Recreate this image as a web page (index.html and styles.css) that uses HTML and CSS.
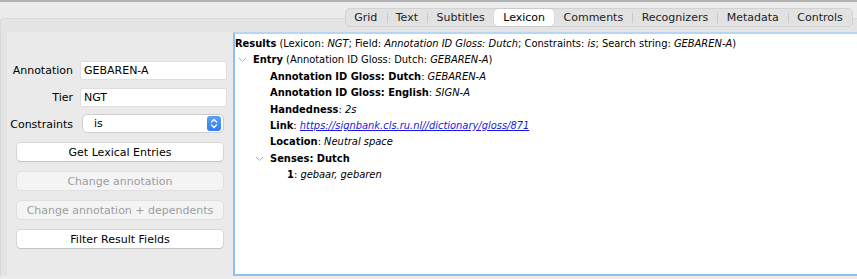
FILE: index.html
```html
<!DOCTYPE html>
<html lang="en">
<head>
    <meta charset="UTF-8">
    <meta name="viewport" content="width=device-width, initial-scale=1.0">
    <title>Lexicon</title>
    <link rel="stylesheet" href="styles.css">
</head>
<body>
    <div class="janela">
        <div class="abas">
            <div class="aba">Grid</div>
            <div class="aba">Text</div>
            <div class="aba">Subtitles</div>
            <div class="aba ativa">Lexicon</div>
            <div class="aba">Comments</div>
            <div class="aba">Recognizers</div>
            <div class="aba">Metadata</div>
            <div class="aba">Controls</div>
        </div>

        <div class="painel">
            <div class="esquerda">
                <div class="campos">
                    <label class="rotulo">Annotation</label>
                    <div class="entrada">GEBAREN-A</div>
                    <label class="rotulo">Tier</label>
                    <div class="entrada">NGT</div>
                    <label class="rotulo">Constraints</label>
                    <div class="selecao">
                        <span>is</span>
                        <span class="setas">
                            <svg width="8" height="11" viewBox="0 0 8 11">
                                <path d="M1.5 4 L4 1.5 L6.5 4 M1.5 7 L4 9.5 L6.5 7" fill="none" stroke="#fff" stroke-width="1.3" stroke-linecap="round" stroke-linejoin="round"/>
                            </svg>
                        </span>
                    </div>
                </div>
                <div class="botoes">
                    <button class="botao">Get Lexical Entries</button>
                    <button class="botao" disabled>Change annotation</button>
                    <button class="botao" disabled>Change annotation + dependents</button>
                    <button class="botao">Filter Result Fields</button>
                </div>
            </div>

            <div class="resultados">
                <div class="linha"><b>Results</b> (Lexicon: <i>NGT</i>; Field: <i>Annotation ID Gloss: Dutch</i>; Constraints: <i>is</i>; Search string: <i>GEBAREN-A</i>)</div>
                <div class="linha nivel1"><svg class="seta" width="9" height="6" viewBox="0 0 9 6"><path d="M1 1 L4.5 4.5 L8 1" fill="none" stroke="#b0b0b0" stroke-width="1"/></svg><b>Entry</b> (Annotation ID Gloss: Dutch: <i>GEBAREN-A</i>)</div>
                <div class="linha nivel2"><b>Annotation ID Gloss: Dutch</b>: <i>GEBAREN-A</i></div>
                <div class="linha nivel2"><b>Annotation ID Gloss: English</b>: <i>SIGN-A</i></div>
                <div class="linha nivel2"><b>Handedness</b>: <i>2s</i></div>
                <div class="linha nivel2"><b>Link</b>: <a href="#"><i>https://signbank.cls.ru.nl//dictionary/gloss/871</i></a></div>
                <div class="linha nivel2"><b>Location</b>: <i>Neutral space</i></div>
                <div class="linha nivel2 comseta"><svg class="seta" width="9" height="6" viewBox="0 0 9 6"><path d="M1 1 L4.5 4.5 L8 1" fill="none" stroke="#b0b0b0" stroke-width="1"/></svg><b>Senses: Dutch</b></div>
                <div class="linha nivel3"><b>1</b>: <i>gebaar, gebaren</i></div>
            </div>
        </div>
    </div>
</body>
</html>
```

FILE: styles.css
```css
body {
    margin: 0;
    font-family: "DejaVu Sans", Verdana, sans-serif;
    font-size: 11px;
    color: #000;
    background-color: #ececec;
    overflow: hidden;
}

.janela {
    height: 279px;
    box-sizing: border-box;
    border-top: 2px solid #b2b2b2;
}

.abas {
    display: flex;
    width: max-content;
    margin: 6px 4px -9px auto;
    position: relative;
    background-color: #e2e2e2;
    border: 1px solid #d2d2d2;
    border-radius: 5px;
    height: 17px;
}

.aba {
    padding: 0 9.25px;
    line-height: 17px;
    color: #222;
    position: relative;
}

.aba:first-child {
    padding-left: 8.5px;
}

.aba + .aba::before {
    content: "";
    position: absolute;
    left: 0;
    top: 4px;
    height: 10px;
    border-left: 1px solid #cbcbcb;
}

.aba.ativa + .aba::before,
.aba.ativa::before {
    border-color: transparent;
}

.aba.ativa {
    background-color: #fff;
    border-radius: 4px;
    box-shadow: 0 0 1px rgba(0, 0, 0, 0.35);
    color: #000;
}

.painel {
    display: flex;
    height: 258px;
    box-sizing: border-box;
    padding: 13px 0 0 6px;
    background-color: #e4e4e4;
    border-top: 1px solid #d8d8d8;
    border-left: 1px solid #d8d8d8;
    border-top-left-radius: 4px;
}

.esquerda {
    width: 226px;
    background-color: #eaeaea;
    padding-top: 30px;
    box-sizing: border-box;
}

.campos {
    display: grid;
    grid-template-columns: 66px 145px;
    column-gap: 8px;
    row-gap: 10px;
    align-items: center;
}

.rotulo {
    text-align: right;
}

.entrada {
    height: 17px;
    line-height: 17px;
    background-color: #fff;
    padding-left: 3px;
    box-shadow: 0 0 0 0.5px #d4d4d4;
}

.campos .selecao {
    margin-top: -2px;
}

.selecao {
    height: 19px;
    width: 142px;
    margin-left: 1px;
    box-sizing: border-box;
    display: flex;
    align-items: center;
    justify-content: space-between;
    background-color: #fff;
    border: 1px solid #cdcdcd;
    border-radius: 5px;
    padding: 0 2px 0 11px;
}

.setas {
    width: 14px;
    height: 15px;
    border-radius: 3px;
    background: linear-gradient(#5aa2f8, #2f7cf0);
    display: flex;
    align-items: center;
    justify-content: center;
}

.botoes {
    display: flex;
    flex-direction: column;
    gap: 11px;
    padding: 10px 10px 0 10px;
}

.botao {
    height: 18px;
    padding: 0;
    font-family: inherit;
    font-size: 11px;
    color: #000;
    background-color: #fff;
    border: none;
    border-radius: 4px;
    box-shadow: 0 0 0 0.5px #c4c4c4, 0 1px 1px rgba(0, 0, 0, 0.18);
}

.botao:disabled {
    color: #9d9d9d;
    background-color: #f4f4f4;
    box-shadow: 0 0 0 0.5px #d6d6d6;
}

.resultados {
    flex: 1;
    background-color: #fff;
    border: 2px solid #8fc0f2;
    border-right: none;
    border-top-color: #b7d6f5;
    padding-top: 2px;
    font-family: "DejaVu Sans Condensed", "DejaVu Sans", sans-serif;
}

.linha {
    height: 16.4px;
    line-height: 16.4px;
    white-space: nowrap;
}

.nivel1 {
    padding-left: 3px;
}

.nivel2 {
    padding-left: 35px;
}

.nivel2.comseta {
    padding-left: 20px;
}

.nivel3 {
    padding-left: 52px;
}

.seta {
    margin-right: 6px;
    vertical-align: middle;
}

.linha a {
    color: #1a1ae6;
    text-decoration: underline;
}
```
